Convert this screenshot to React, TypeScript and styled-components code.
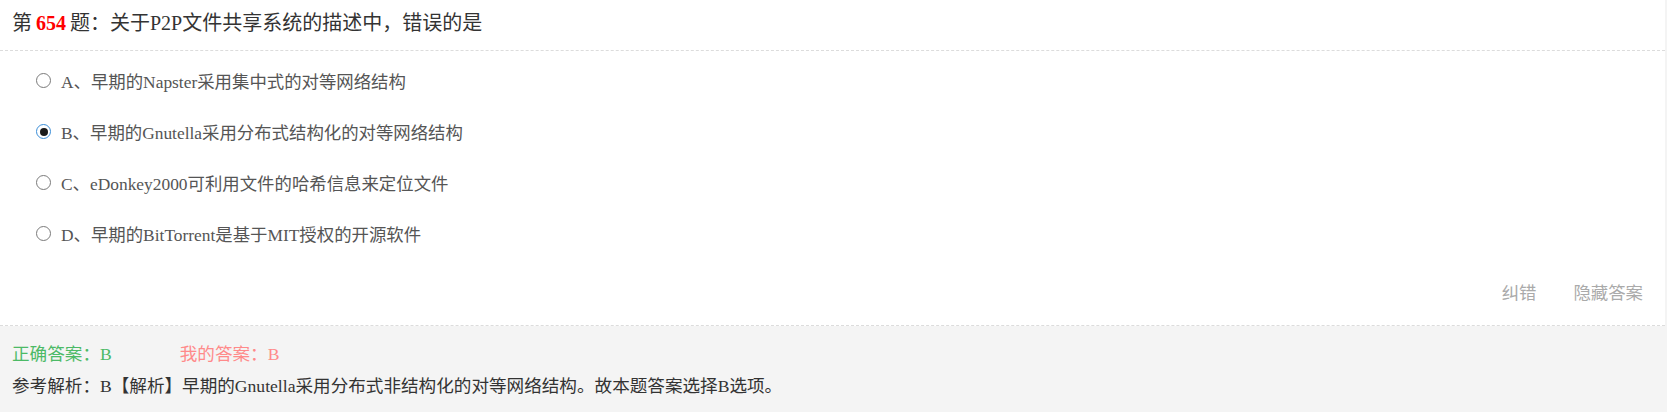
import React from "react";
import styled, { createGlobalStyle } from "styled-components";

const GlobalStyle = createGlobalStyle`
  html, body {
    margin: 0;
    padding: 0;
    background: #f4f4f4;
  }
  body {
    font-family: "Liberation Serif", "Noto Sans CJK SC", serif;
  }
`;

const Page = styled.div`
  width: 1667px;
  min-height: 412px;
  background: #f4f4f4;
`;

const Panel = styled.div`
  background: #fff;
  margin-right: 2px;
  border-bottom: 1px dashed #dcdcdc;
`;

const Title = styled.div`
  padding: 0 12px 4px;
  line-height: 46px;
  font-size: 20px;
  color: #333;
  border-bottom: 1px dashed #dcdcdc;
  white-space: nowrap;
`;

const Num = styled.span`
  color: #f00;
  font-weight: bold;
  margin: 0 4px;
`;

const Options = styled.div`
  padding: 4px 0 0 36px;
`;

const Option = styled.label`
  display: flex;
  align-items: center;
  height: 51px;
  font-size: 17.4px;
  color: #555;
  white-space: nowrap;
`;

const Radio = styled.span<{ $checked?: boolean }>`
  box-sizing: border-box;
  width: 15px;
  height: 15px;
  border-radius: 50%;
  border: 1px solid ${(p) => (p.$checked ? "#3b8ed8" : "#7a7a7a")};
  margin-right: 10px;
  display: flex;
  align-items: center;
  justify-content: center;
  background: #fff;
  &::after {
    content: "";
    width: 8px;
    height: 8px;
    border-radius: 50%;
    background: #1a1a1a;
    display: ${(p) => (p.$checked ? "block" : "none")};
  }
`;

const Actions = styled.div`
  display: flex;
  justify-content: flex-end;
  gap: 37px;
  padding: 14px 22px 12px 0;
  line-height: 40px;
  font-size: 17.4px;
  color: #aaa;
`;

const Action = styled.span`
  cursor: pointer;
`;

const AnswerBox = styled.div`
  padding: 12px 12px 12px;
  font-size: 17.6px;
  line-height: 32px;
`;

const AnswerRow = styled.div`
  display: flex;
  gap: 68px;
  white-space: nowrap;
`;

const Correct = styled.span`
  color: #4cba66;
`;

const Mine = styled.span`
  color: #ff8a8a;
`;

const Analysis = styled.div`
  color: #333;
  white-space: nowrap;
`;

const options = [
  { key: "A", text: "A、早期的Napster采用集中式的对等网络结构" },
  { key: "B", text: "B、早期的Gnutella采用分布式结构化的对等网络结构", checked: true },
  { key: "C", text: "C、eDonkey2000可利用文件的哈希信息来定位文件" },
  { key: "D", text: "D、早期的BitTorrent是基于MIT授权的开源软件" },
];

export default function App() {
  return (
    <>
      <GlobalStyle />
      <Page>
        <Panel>
          <Title>
            第<Num>654</Num>题：关于P2P文件共享系统的描述中，错误的是
          </Title>
          <Options>
            {options.map((o) => (
              <Option key={o.key}>
                <Radio $checked={o.checked} />
                {o.text}
              </Option>
            ))}
          </Options>
          <Actions>
            <Action>纠错</Action>
            <Action>隐藏答案</Action>
          </Actions>
        </Panel>
        <AnswerBox>
          <AnswerRow>
            <Correct>正确答案：B</Correct>
            <Mine>我的答案：B</Mine>
          </AnswerRow>
          <Analysis>
            参考解析：B【解析】早期的Gnutella采用分布式非结构化的对等网络结构。故本题答案选择B选项。
          </Analysis>
        </AnswerBox>
      </Page>
    </>
  );
}
